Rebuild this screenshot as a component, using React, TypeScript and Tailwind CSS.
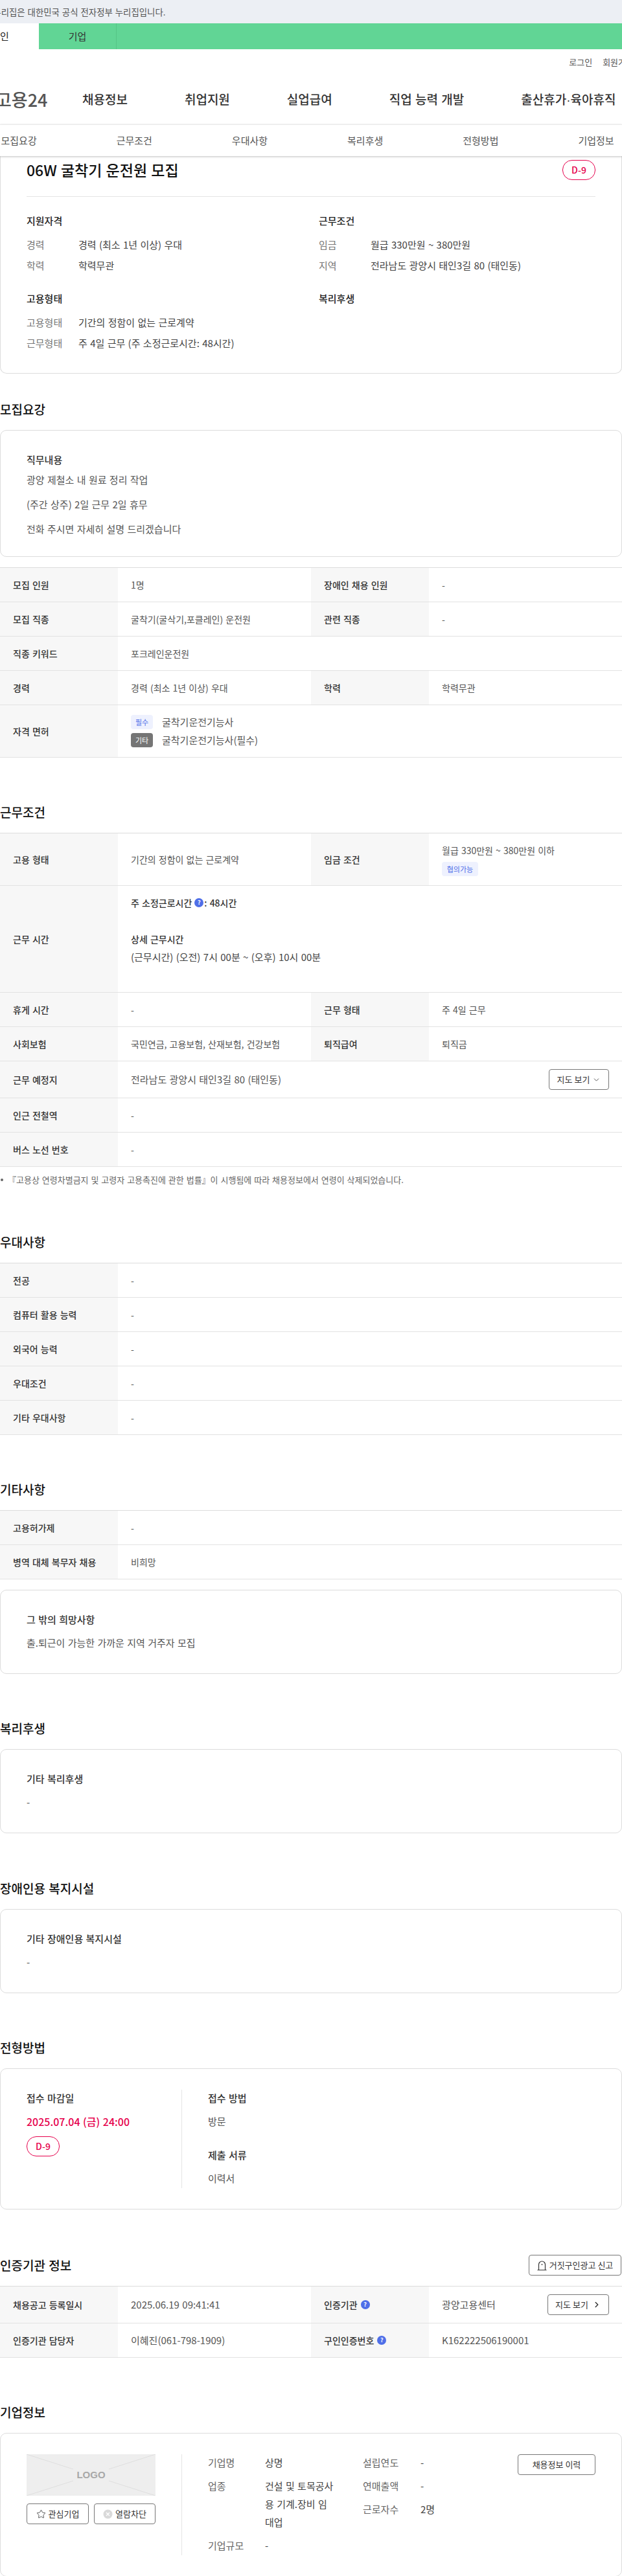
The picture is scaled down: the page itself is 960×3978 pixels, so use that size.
import React from 'react';
import { ChevronDown, ChevronRight, Star } from 'lucide-react';

const mainMenu: React.ReactNode[] = [
  '채용정보',
  '취업지원',
  '실업급여',
  '직업 능력 개발',
  <>
    출산휴가<span className="font-['Liberation_Sans',sans-serif]">·</span>육아휴직
  </>,
];
const subMenu = ['모집요강', '근무조건', '우대사항', '복리후생', '전형방법', '기업정보'];

const SectionTitle = ({ children, className = '' }: { children: React.ReactNode; className?: string }) => (
  <h2 className={`h-7 mb-[18px] text-[19px] leading-7 font-medium text-[#111] ${className}`}>{children}</h2>
);

const Deadline = () => (
  <span className="flex h-[31px] w-[51px] items-center justify-center rounded-[15px] border border-[#e6004c] text-[14px] font-medium text-[#e6004c]">
    D-9
  </span>
);

const Help = () => (
  <span className="inline-flex h-[14px] w-[14px] shrink-0 items-center justify-center rounded-full bg-[#4f6fe8] text-[9px] font-bold text-white">
    ?
  </span>
);

// table pieces
const Table = ({ children }: { children: React.ReactNode }) => (
  <div className="border-t border-[#dcdcdc]">{children}</div>
);

const Row = ({ children, className = 'h-[53px]' }: { children: React.ReactNode; className?: string }) => (
  <div className={`flex border-b border-[#e2e2e2] ${className}`}>{children}</div>
);

const Th = ({ children }: { children: React.ReactNode }) => (
  <div className="flex w-[182px] shrink-0 items-center gap-[5px] bg-[#f7f7f7] pl-5 text-[14px] font-medium text-[#333]">
    {children}
  </div>
);

const Td = ({ children, wide = false, className = 'text-[14px]' }: { children: React.ReactNode; wide?: boolean; className?: string }) => (
  <div className={`flex items-center pl-[20px] text-[#555] ${className} ${wide ? 'flex-1' : 'w-[298px] shrink-0'}`}>
    {children}
  </div>
);

const Tag = ({ children, dark = false, className = 'w-[34px]' }: { children: React.ReactNode; dark?: boolean; className?: string }) => (
  <span
    className={`flex h-[22px] shrink-0 items-center justify-center rounded-[4px] text-[11px] ${className} ${
      dark ? 'bg-[#757575] text-white' : 'bg-[#eef1fe] text-[#4f6fe8]'
    }`}
  >
    {children}
  </span>
);

const TextCard = ({ title, text }: { title: string; text: string }) => (
  <div className="rounded-[10px] border border-[#dcdcdc] px-10 pt-[33px] pb-[35px]">
    <h3 className="h-6 text-[15px] leading-6 font-medium text-[#333]">{title}</h3>
    <p className="mt-3 h-6 text-[15px] leading-6 text-[#555]">{text}</p>
  </div>
);

const SummaryItem = ({ label, value }: { label: string; value: string }) => (
  <div className="flex h-8 items-center text-[15px]">
    <span className="w-[80px] shrink-0 text-[#777]">{label}</span>
    <span className="text-[#444]">{value}</span>
  </div>
);

const CompanyItem = ({ label, children, labelWidth = 'w-[88px]' }: { label: string; children: React.ReactNode; labelWidth?: string }) => (
  <div className="flex text-[15px] leading-7">
    <span className={`shrink-0 text-[#666] ${labelWidth}`}>{label}</span>
    <span className="w-[107px] break-all text-[#444]">{children}</span>
  </div>
);

const OutlineButton = ({ children, className = '' }: { children: React.ReactNode; className?: string }) => (
  <button className={`flex h-8 items-center justify-center rounded-[4px] border border-[#777] bg-white text-[13px] text-[#333] ${className}`}>
    {children}
  </button>
);

const LogoPlaceholder = () => (
  <div className="relative flex h-16 w-[199px] items-center justify-center bg-[#eeeeee]">
    <svg className="absolute inset-0" width="199" height="64" viewBox="0 0 199 64" fill="none" stroke="#dedede">
      <path d="M0 0 72 23M199 0 127 23M0 64 72 41M199 64 127 41" />
    </svg>
    <span className="relative font-['Liberation_Sans',sans-serif] text-[15px] font-bold text-[#a8a8a8]">LOGO</span>
  </div>
);

export default function App() {
  return (
    <div className="w-[960px] overflow-hidden bg-white font-['Noto_Sans_CJK_KR',sans-serif] text-[#333] [word-spacing:1px]">
      {/* Gov banner */}
      <div className="h-9 bg-[#eceff4]">
        <p className="ml-[-27px] text-[13.4px] leading-9 whitespace-nowrap text-[#555]">이 누리집은 대한민국 공식 전자정부 누리집입니다.</p>
      </div>

      {/* User type tabs */}
      <div className="flex h-10 bg-[#61d595]">
        <div className="ml-[-60px] flex w-[120px] items-center justify-center bg-white text-[15px] text-[#222]">개인</div>
        <div className="flex w-[120px] items-center justify-center border-r border-[#55c486] text-[15px] text-[#333]">기업</div>
      </div>

      {/* Header */}
      <div className="ml-[-60px] w-[1080px]">
        <div className="flex h-10 items-center justify-end gap-4 pr-[42px] text-[13px] text-[#555]">
          <span>로그인</span>
          <span>회원가입</span>
        </div>
        <div className="flex h-[76px] items-center pl-[53px]">
          <span className="mr-[53px] w-[81px] shrink-0 text-[27px] font-medium whitespace-nowrap text-[#555]">고용24</span>
          <nav className="flex gap-[88px] text-[19px] font-medium whitespace-nowrap text-[#333]">
            {mainMenu.map((item, i) => (
              <span key={i}>{item}</span>
            ))}
          </nav>
        </div>
      </div>

      {/* Sticky section tabs */}
      <div className="relative z-10 border-t border-[#eaeaea] bg-white shadow-[0_1px_3px_rgba(0,0,0,0.25)]">
        <div className="ml-[-60px] flex h-12 w-[1080px] items-center text-[15px] text-[#555]">
          {subMenu.map((item) => (
            <span key={item} className="w-[178.2px] text-center">
              {item}
            </span>
          ))}
        </div>
      </div>

      {/* Summary card */}
      <div className="rounded-b-[10px] border-x border-b border-[#dcdcdc] px-10 pt-[6px] pb-[30px]">
        <div className="flex items-start justify-between border-b border-[#e5e5e5] pb-[25px]">
          <h1 className="text-[23px] leading-[30px] font-medium text-[#111]">06W 굴착기 운전원 모집</h1>
          <Deadline />
        </div>
        <div className="mt-[25px] grid grid-cols-2 gap-x-6 gap-y-[23px]">
          <div>
            <h3 className="mb-[9px] h-6 text-[15px] leading-6 font-medium text-[#222]">지원자격</h3>
            <SummaryItem label="경력" value="경력 (최소 1년 이상) 우대" />
            <SummaryItem label="학력" value="학력무관" />
          </div>
          <div>
            <h3 className="mb-[9px] h-6 text-[15px] leading-6 font-medium text-[#222]">근무조건</h3>
            <SummaryItem label="임금" value="월급 330만원 ~ 380만원" />
            <SummaryItem label="지역" value="전라남도 광양시 태인3길 80 (태인동)" />
          </div>
          <div>
            <h3 className="mb-[9px] h-6 text-[15px] leading-6 font-medium text-[#222]">고용형태</h3>
            <SummaryItem label="고용형태" value="기간의 정함이 없는 근로계약" />
            <SummaryItem label="근무형태" value="주 4일 근무 (주 소정근로시간: 48시간)" />
          </div>
          <div>
            <h3 className="h-6 text-[15px] leading-6 font-medium text-[#222]">복리후생</h3>
          </div>
        </div>
      </div>

      {/* 모집요강 */}
      <SectionTitle className="mt-[41px]">모집요강</SectionTitle>
      <div className="rounded-[10px] border border-[#dcdcdc] px-10 pt-[33px] pb-[23px]">
        <h3 className="h-6 text-[15px] leading-6 font-medium text-[#333]">직무내용</h3>
        <div className="text-[15px] leading-[38px] text-[#555]">
          <p>광양 제철소 내 원료 정리 작업</p>
          <p>(주간 상주) 2일 근무 2일 휴무</p>
          <p>전화 주시면 자세히 설명 드리겠습니다</p>
        </div>
      </div>
      <div className="mt-4">
        <Table>
          <Row>
            <Th>모집 인원</Th>
            <Td>1명</Td>
            <Th>장애인 채용 인원</Th>
            <Td wide>-</Td>
          </Row>
          <Row>
            <Th>모집 직종</Th>
            <Td>굴착기(굴삭기,포클레인) 운전원</Td>
            <Th>관련 직종</Th>
            <Td wide>-</Td>
          </Row>
          <Row>
            <Th>직종 키워드</Th>
            <Td wide>포크레인운전원</Td>
          </Row>
          <Row>
            <Th>경력</Th>
            <Td>경력 (최소 1년 이상) 우대</Td>
            <Th>학력</Th>
            <Td wide>학력무관</Td>
          </Row>
          <Row className="h-[81px]">
            <Th>자격 면허</Th>
            <Td wide>
              <div className="flex flex-col gap-[6px] text-[15px]">
                <div className="flex items-center gap-[14px]">
                  <Tag>필수</Tag>
                  굴착기운전기능사
                </div>
                <div className="flex items-center gap-[14px]">
                  <Tag dark>기타</Tag>
                  굴착기운전기능사(필수)
                </div>
              </div>
            </Td>
          </Row>
        </Table>
      </div>

      {/* 근무조건 */}
      <SectionTitle className="mt-[70px]">근무조건</SectionTitle>
      <Table>
        <Row className="h-[81px]">
          <Th>고용 형태</Th>
          <Td>기간의 정함이 없는 근로계약</Td>
          <Th>임금 조건</Th>
          <Td wide>
            <div className="flex flex-col items-start gap-[6px]">
              <span className="leading-6">월급 330만원 ~ 380만원 이하</span>
              <Tag className="w-[56px]">협의가능</Tag>
            </div>
          </Td>
        </Row>
        <Row className="h-[165px]">
          <Th>근무 시간</Th>
          <div className="flex-1 pt-3 pl-[20px] text-[15px] leading-7 text-[#444]">
            <p className="flex items-center gap-[4px] text-[14px] font-medium text-[#333]">
              주 소정근로시간 <Help />
              <span className="ml-[-3px]">: 48시간</span>
            </p>
            <p className="mt-7 text-[14px] font-medium text-[#333]">상세 근무시간</p>
            <p>(근무시간) (오전) 7시 00분 ~ (오후) 10시 00분</p>
          </div>
        </Row>
        <Row>
          <Th>휴게 시간</Th>
          <Td>-</Td>
          <Th>근무 형태</Th>
          <Td wide>주 4일 근무</Td>
        </Row>
        <Row>
          <Th>사회보험</Th>
          <Td>국민연금, 고용보험, 산재보험, 건강보험</Td>
          <Th>퇴직급여</Th>
          <Td wide>퇴직금</Td>
        </Row>
        <Row className="h-[57px]">
          <Th>근무 예정지</Th>
          <div className="flex flex-1 items-center justify-between pr-5 pl-[20px] text-[15px] text-[#555]">
            전라남도 광양시 태인3길 80 (태인동)
            <OutlineButton className="w-[93px] gap-[4px]">
              지도 보기
              <ChevronDown size={13} strokeWidth={1.5} />
            </OutlineButton>
          </div>
        </Row>
        <Row>
          <Th>인근 전철역</Th>
          <Td wide>-</Td>
        </Row>
        <Row>
          <Th>버스 노선 번호</Th>
          <Td wide>-</Td>
        </Row>
      </Table>
      <p className="mt-[10px] flex h-5 items-center gap-[7px] pl-[1px] text-[13px] text-[#666]">
        <span className="h-1 w-1 rounded-full bg-[#666]" />
        『고용상 연령차별금지 및 고령자 고용촉진에 관한 법률』이 시행됨에 따라 채용정보에서 연령이 삭제되었습니다.
      </p>

      {/* 우대사항 */}
      <SectionTitle className="mt-[72px]">우대사항</SectionTitle>
      <Table>
        {['전공', '컴퓨터 활용 능력', '외국어 능력', '우대조건', '기타 우대사항'].map((label) => (
          <Row key={label}>
            <Th>{label}</Th>
            <Td wide>-</Td>
          </Row>
        ))}
      </Table>

      {/* 기타사항 */}
      <SectionTitle className="mt-[70px]">기타사항</SectionTitle>
      <Table>
        <Row>
          <Th>고용허가제</Th>
          <Td wide>-</Td>
        </Row>
        <Row>
          <Th>병역 대체 복무자 채용</Th>
          <Td wide>비희망</Td>
        </Row>
      </Table>
      <div className="mt-4">
        <TextCard title="그 밖의 희망사항" text="출.퇴근이 가능한 가까운 지역 거주자 모집" />
      </div>

      {/* 복리후생 */}
      <SectionTitle className="mt-[70px]">복리후생</SectionTitle>
      <TextCard title="기타 복리후생" text="-" />

      {/* 장애인용 복지시설 */}
      <SectionTitle className="mt-[71px]">장애인용 복지시설</SectionTitle>
      <TextCard title="기타 장애인용 복지시설" text="-" />

      {/* 전형방법 */}
      <SectionTitle className="mt-[70px]">전형방법</SectionTitle>
      <div className="flex rounded-[10px] border border-[#dcdcdc] px-10 py-8 text-[15px]">
        <div className="w-[239px] shrink-0 pt-px">
          <h3 className="h-6 leading-6 font-medium text-[#333]">접수 마감일</h3>
          <p className="mt-3 mb-[11px] h-6 text-[16px] leading-6 font-medium text-[#e6004c]">2025.07.04 (금) 24:00</p>
          <Deadline />
        </div>
        <div className="flex-1 border-l border-[#e5e5e5] pt-px pb-[3px] pl-10">
          <h3 className="h-6 leading-6 font-medium text-[#333]">접수 방법</h3>
          <p className="mt-3 h-6 leading-6 text-[#555]">방문</p>
          <h3 className="mt-7 h-6 leading-6 font-medium text-[#333]">제출 서류</h3>
          <p className="mt-3 h-6 leading-6 text-[#555]">이력서</p>
        </div>
      </div>

      {/* 인증기관 정보 */}
      <div className="mt-[70px] mb-4 flex h-8 items-center justify-between">
        <h2 className="text-[19px] leading-7 font-medium text-[#111]">인증기관 정보</h2>
        <OutlineButton className="mr-px w-[143px] gap-[4px]">
          <svg width="15" height="17" viewBox="0 0 15 17" fill="none" stroke="#333" strokeWidth="1.2">
            <path d="M2.5 15V7a5 5 0 0 1 10 0v8M.5 15.5h14M7.5 6v2" />
          </svg>
          거짓구인광고 신고
        </OutlineButton>
      </div>
      <Table>
        <Row className="h-[57px]">
          <Th>채용공고 등록일시</Th>
          <Td className="text-[15px]">2025.06.19 09:41:41</Td>
          <Th>
            인증기관 <Help />
          </Th>
          <div className="flex flex-1 items-center justify-between pr-5 pl-[20px] text-[15px] text-[#555]">
            광양고용센터
            <OutlineButton className="w-[95px] gap-[6px]">
              지도 보기
              <ChevronRight size={14} strokeWidth={2.5} />
            </OutlineButton>
          </div>
        </Row>
        <Row>
          <Th>인증기관 담당자</Th>
          <Td className="text-[15px]">이혜진(061-798-1909)</Td>
          <Th>
            구인인증번호 <Help />
          </Th>
          <Td wide className="text-[15px]">K162222506190001</Td>
        </Row>
      </Table>

      {/* 기업정보 */}
      <SectionTitle className="mt-[70px]">기업정보</SectionTitle>
      <div className="flex h-[222px] rounded-[10px] border border-[#dcdcdc] px-10 pt-8">
        <div className="w-[239px] shrink-0">
          <LogoPlaceholder />
          <div className="mt-3 flex w-[199px] gap-2">
            <OutlineButton className="w-[96px] gap-[4px]">
              <Star size={15} strokeWidth={1.3} />
              관심기업
            </OutlineButton>
            <OutlineButton className="w-[95px] gap-[4px]">
              <svg width="15" height="15" viewBox="0 0 15 15" fill="none">
                <circle cx="7.5" cy="7.5" r="7" fill="#d9d9d9" />
                <path d="M5 5l5 5M10 5l-5 5" stroke="#fff" strokeWidth="1.3" />
              </svg>
              열람차단
            </OutlineButton>
          </div>
        </div>
        <div className="flex h-[156px] flex-1 items-start border-l border-[#e5e5e5] pl-10">
          <div className="mt-[-1px] flex w-[239px] shrink-0 flex-col gap-2">
            <CompanyItem label="기업명">상명</CompanyItem>
            <CompanyItem label="업종">건설 및 토목공사용 기계.장비 임대업</CompanyItem>
            <CompanyItem label="기업규모">-</CompanyItem>
          </div>
          <div className="mt-[-1px] flex flex-1 flex-col gap-2">
            <CompanyItem label="설립연도" labelWidth="w-[89px]">-</CompanyItem>
            <CompanyItem label="연매출액" labelWidth="w-[89px]">-</CompanyItem>
            <CompanyItem label="근로자수" labelWidth="w-[89px]">2명</CompanyItem>
          </div>
          <OutlineButton className="w-[120px] shrink-0">채용정보 이력</OutlineButton>
        </div>
      </div>
    </div>
  );
}
